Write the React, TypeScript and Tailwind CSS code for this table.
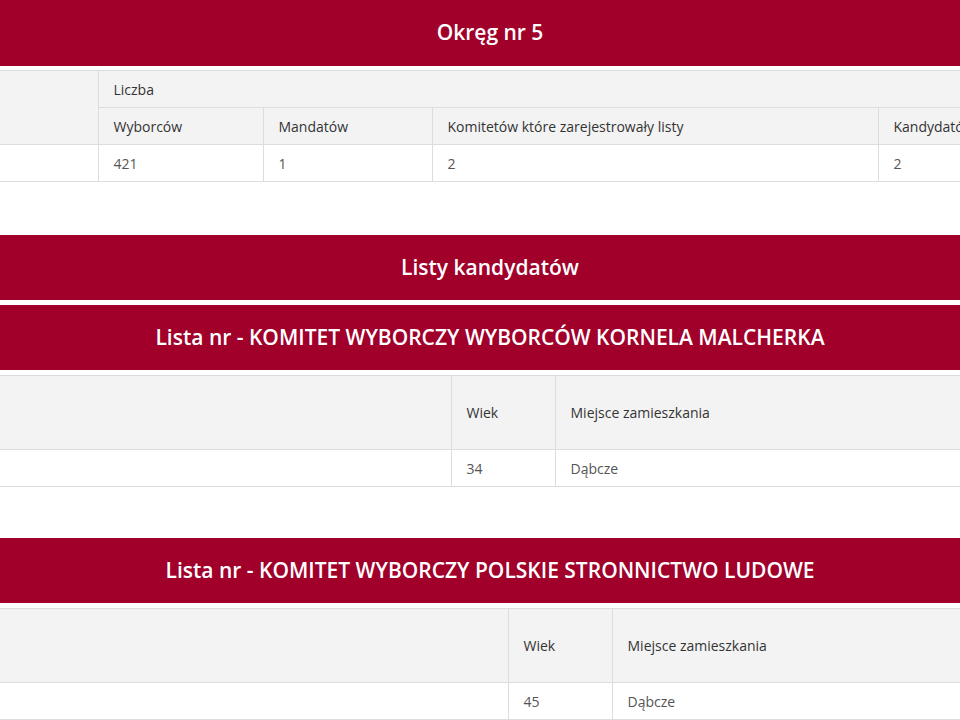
import React from "react";

const font = { fontFamily: '"Open Sans", "Noto Sans", Arial, sans-serif' };

function Bar({ children, className = "" }: { children: React.ReactNode; className?: string }) {
  return (
    <div className={"flex h-[65px] items-center justify-center bg-[#a0002a] text-[21px] font-semibold text-white " + className}>
      {children}
    </div>
  );
}

const th = "border-r border-b border-[#dddddd] px-[15px] text-left align-middle font-normal text-[#333333]";
const td = "border-r border-b border-[#dddddd] px-[15px] h-[37px] text-left align-middle text-[#555555]";

function CandidateTable({ first, second, age }: { first: number; second: number; age: string }) {
  return (
    <table className="mt-[5px] w-[980px] table-fixed border-collapse border-t border-[#dddddd] text-[14px]">
      <colgroup>
        <col style={{ width: first }} />
        <col style={{ width: second }} />
        <col />
      </colgroup>
      <thead>
        <tr className="h-[74px] bg-[#f3f3f3]">
          <th className={th}></th>
          <th className={th}>Wiek</th>
          <th className={th}>Miejsce zamieszkania</th>
        </tr>
      </thead>
      <tbody>
        <tr>
          <td className={td}></td>
          <td className={td}>{age}</td>
          <td className={td}>Dąbcze</td>
        </tr>
      </tbody>
    </table>
  );
}

export default function App() {
  return (
    <div className="h-[720px] w-[960px] overflow-hidden bg-white" style={font}>
      <div className="w-[980px]">
        <Bar className="h-[66px]">Okręg nr 5</Bar>
        <table className="mt-[4px] w-[980px] table-fixed border-collapse border-t border-[#dddddd] text-[14px]">
          <colgroup>
            <col className="w-[98px]" />
            <col className="w-[165px]" />
            <col className="w-[169px]" />
            <col className="w-[446px]" />
            <col />
          </colgroup>
          <thead>
            <tr className="h-[37px] bg-[#f3f3f3]">
              <th rowSpan={2} className={th}></th>
              <th colSpan={4} className={th}>Liczba</th>
            </tr>
            <tr className="h-[37px] bg-[#f3f3f3]">
              <th className={th}>Wyborców</th>
              <th className={th}>Mandatów</th>
              <th className={th}>Komitetów które zarejestrowały listy</th>
              <th className={th + " whitespace-nowrap"}>Kandydatów</th>
            </tr>
          </thead>
          <tbody>
            <tr>
              <td className={td}></td>
              <td className={td}>421</td>
              <td className={td}>1</td>
              <td className={td}>2</td>
              <td className={td}>2</td>
            </tr>
          </tbody>
        </table>

        <Bar className="mt-[53px] h-[64px]">Listy kandydatów</Bar>
        <Bar className="mt-[5px]">Lista nr - KOMITET WYBORCZY WYBORCÓW KORNELA MALCHERKA</Bar>
        <CandidateTable first={451} second={104} age="34" />

        <Bar className="mt-[51px]">Lista nr - KOMITET WYBORCZY POLSKIE STRONNICTWO LUDOWE</Bar>
        <CandidateTable first={508} second={104} age="45" />
      </div>
    </div>
  );
}
